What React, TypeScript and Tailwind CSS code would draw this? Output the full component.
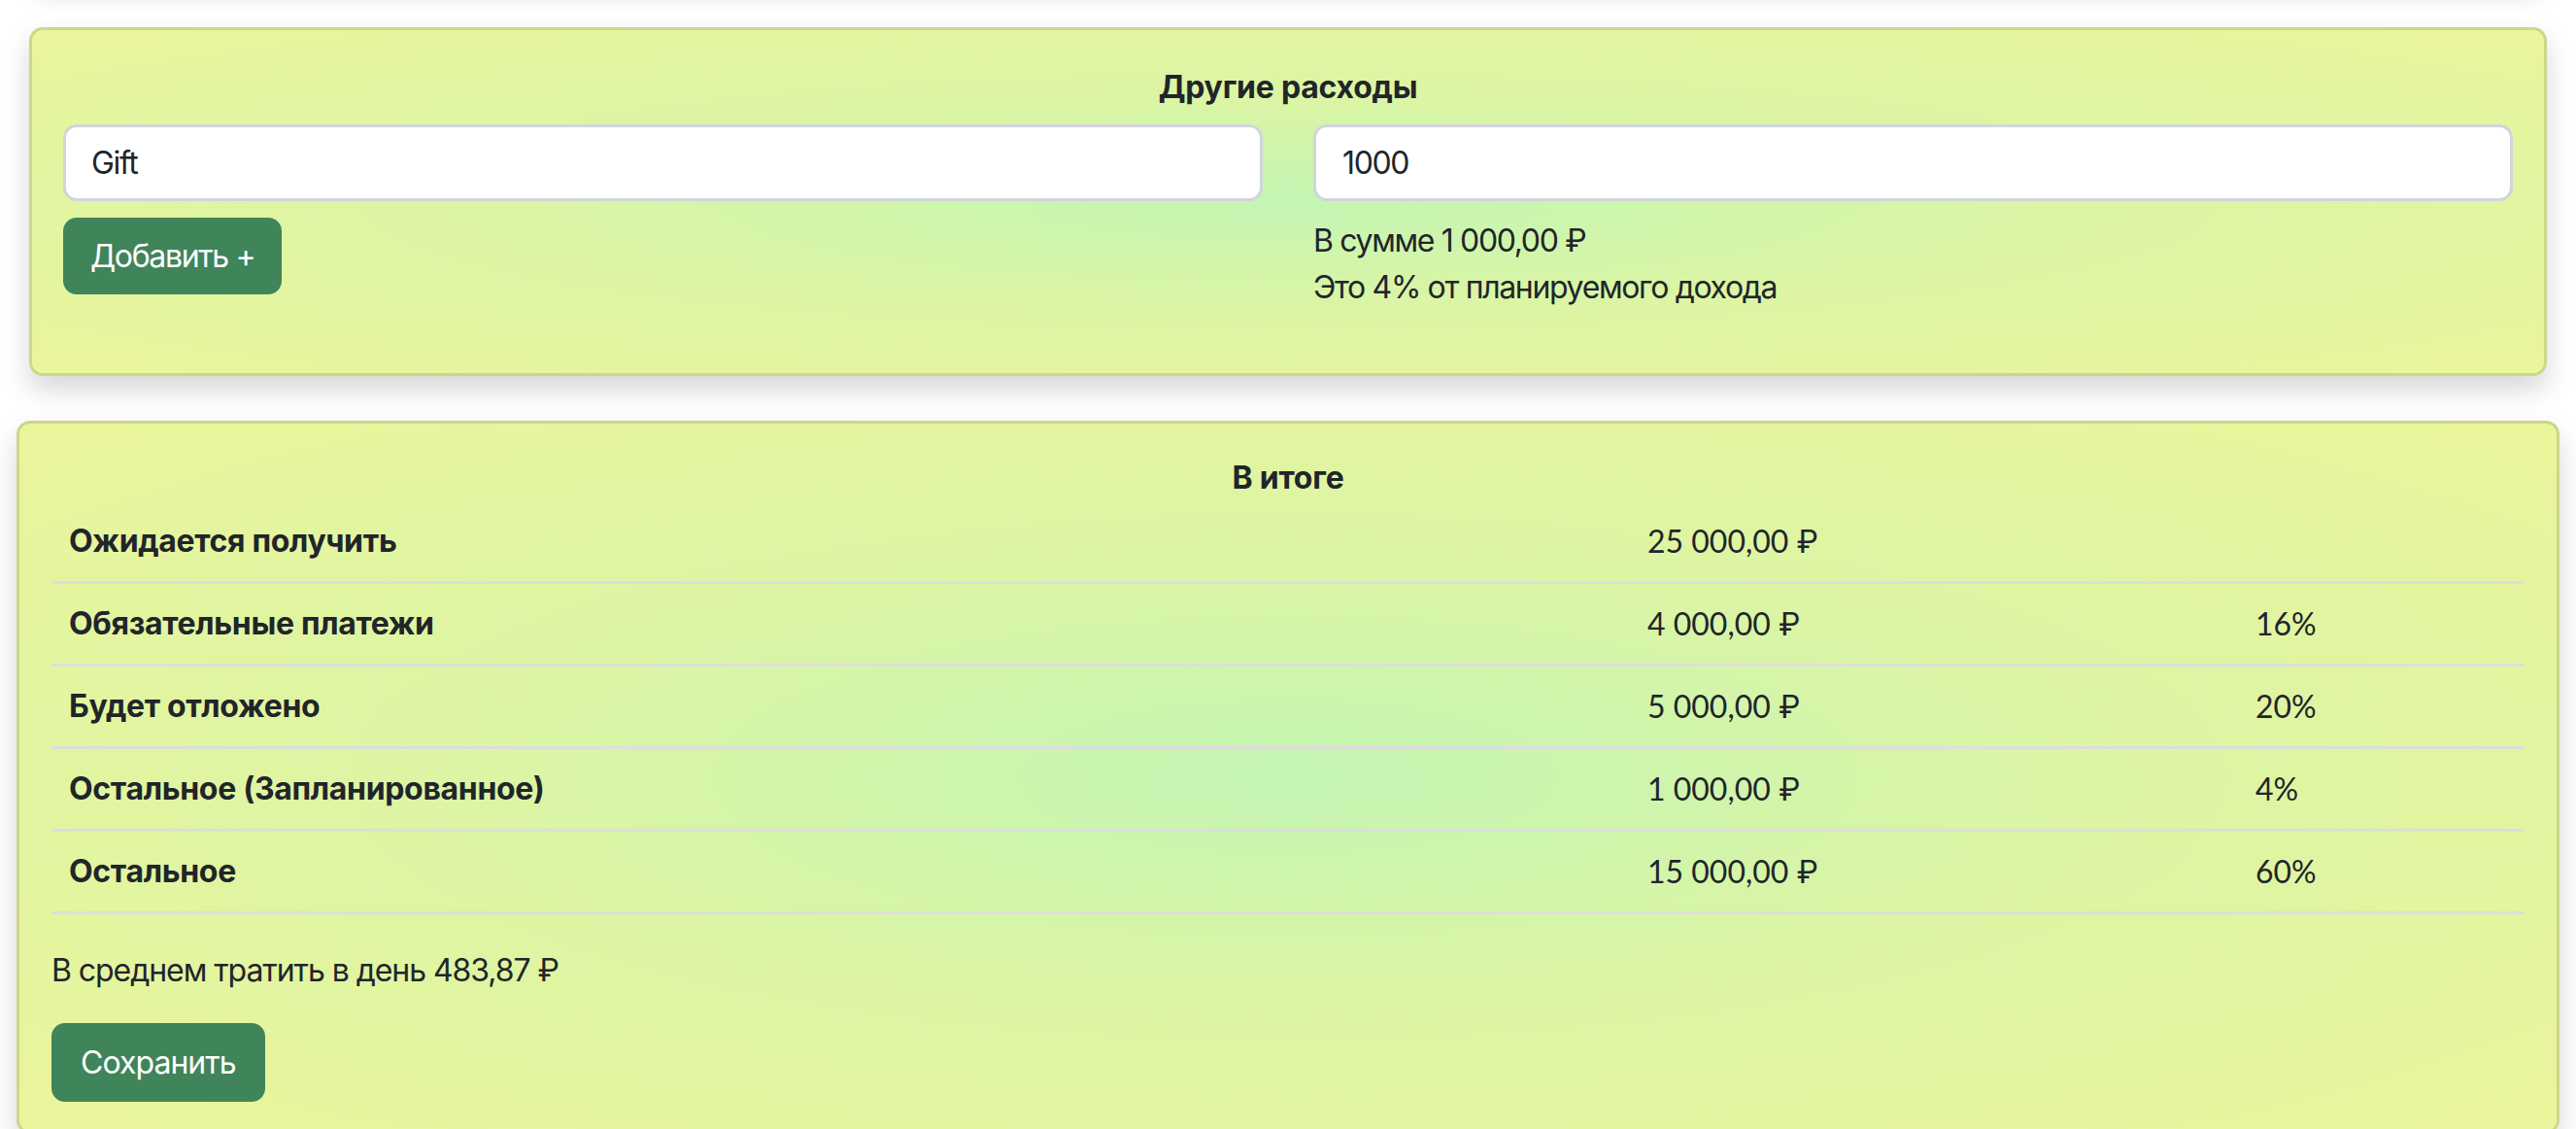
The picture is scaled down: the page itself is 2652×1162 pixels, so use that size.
import React from "react";

const body = "font-['Inter','Noto_Sans',sans-serif]";
const num = "font-['Lato','Inter',sans-serif]";
const reg = "tracking-[-0.042em]";

const cardBg =
  "bg-[radial-gradient(ellipse_at_center,#c4f5b3_0%,#dcf5a4_45%,#ebf59b_100%)]";

const rows: { label: string; amount: string; pct: string }[] = [
  { label: "Ожидается получить", amount: "25 000,00 ₽", pct: "" },
  { label: "Обязательные платежи", amount: "4 000,00 ₽", pct: "16%" },
  { label: "Будет отложено", amount: "5 000,00 ₽", pct: "20%" },
  { label: "Остальное (Запланированное)", amount: "1 000,00 ₽", pct: "4%" },
  { label: "Остальное", amount: "15 000,00 ₽", pct: "60%" },
];

export default function App() {
  return (
    <div className={`w-[2652px] h-[1162px] overflow-hidden bg-white text-[#212529] ${body} tracking-[-0.015em]`}>
      {/* card above, out of view; only its shadow shows */}
      <div className="mx-[30px] -mt-[60px] h-[54px] rounded-b-[14px] bg-white shadow-[0_4px_18px_rgba(0,0,0,0.10)]" />

      {/* Другие расходы */}
      <div
        className={`mx-[30px] mt-[34px] rounded-[14px] border-[3px] border-[#cdd68a] ${cardBg} shadow-[0_14px_28px_rgba(0,0,0,0.16)] px-[32px] pt-[35px] pb-[64px]`}
      >
        <div className="text-center text-[32px] leading-[48px] font-bold">Другие расходы</div>
        <div className="mt-[14px] grid grid-cols-2 gap-x-[52px]">
          <div className="flex flex-col items-start">
            <div className={`w-full h-[79px] rounded-[14px] border-[3px] border-[#d1d5db] bg-white px-[26px] flex items-center text-[32px] ${reg}`}>
              Gift
            </div>
            <button className={`mt-[17px] h-[79px] px-[28px] rounded-[14px] bg-[#40845a] text-white text-[32px] leading-none ${reg}`}>
              Добавить +
            </button>
          </div>
          <div className="flex flex-col">
            <div className={`w-full h-[79px] rounded-[14px] border-[3px] border-[#d1d5db] bg-white px-[27px] flex items-center text-[32px] ${reg}`}>
              1000
            </div>
            <div className={`mt-[17px] text-[32px] leading-[48px] ${reg}`}>В сумме 1 000,00 ₽</div>
            <div className={`text-[32px] leading-[48px] ${reg}`}>Это 4% от планируемого дохода</div>
          </div>
        </div>
      </div>

      {/* В итоге */}
      <div
        className={`mx-[17px] mt-[46px] rounded-[14px] border-[3px] border-[#cdd68a] ${cardBg} shadow-[0_14px_28px_rgba(0,0,0,0.16)] px-[33px] pt-[32px] pb-[30px]`}
      >
        <div className="text-center text-[32px] leading-[48px] font-bold">В итоге</div>
        <div className="grid grid-cols-[1625px_626px_1fr]">
          {rows.map((r) => (
            <React.Fragment key={r.label}>
              <div className="h-[85px] border-b-[3px] border-[#dcdedd] pl-[18px] flex items-center text-[32px] font-bold tracking-[-0.01em]">
                {r.label}
              </div>
              <div className={`h-[85px] border-b-[3px] border-[#dcdedd] pl-[18px] flex items-center text-[32px] ${num} tracking-normal`}>
                {r.amount}
              </div>
              <div className={`h-[85px] border-b-[3px] border-[#dcdedd] pl-[18px] flex items-center text-[32px] ${num} tracking-normal`}>
                {r.pct}
              </div>
            </React.Fragment>
          ))}
        </div>
        <div className="mt-[34px] text-[32px] leading-[48px] tracking-[-0.033em]">В среднем тратить в день 483,87 ₽</div>
        <button className="mt-[30px] h-[81px] px-[30px] rounded-[14px] bg-[#40845a] text-white text-[32px] leading-none tracking-[-0.03em]">
          Сохранить
        </button>
      </div>
    </div>
  );
}
